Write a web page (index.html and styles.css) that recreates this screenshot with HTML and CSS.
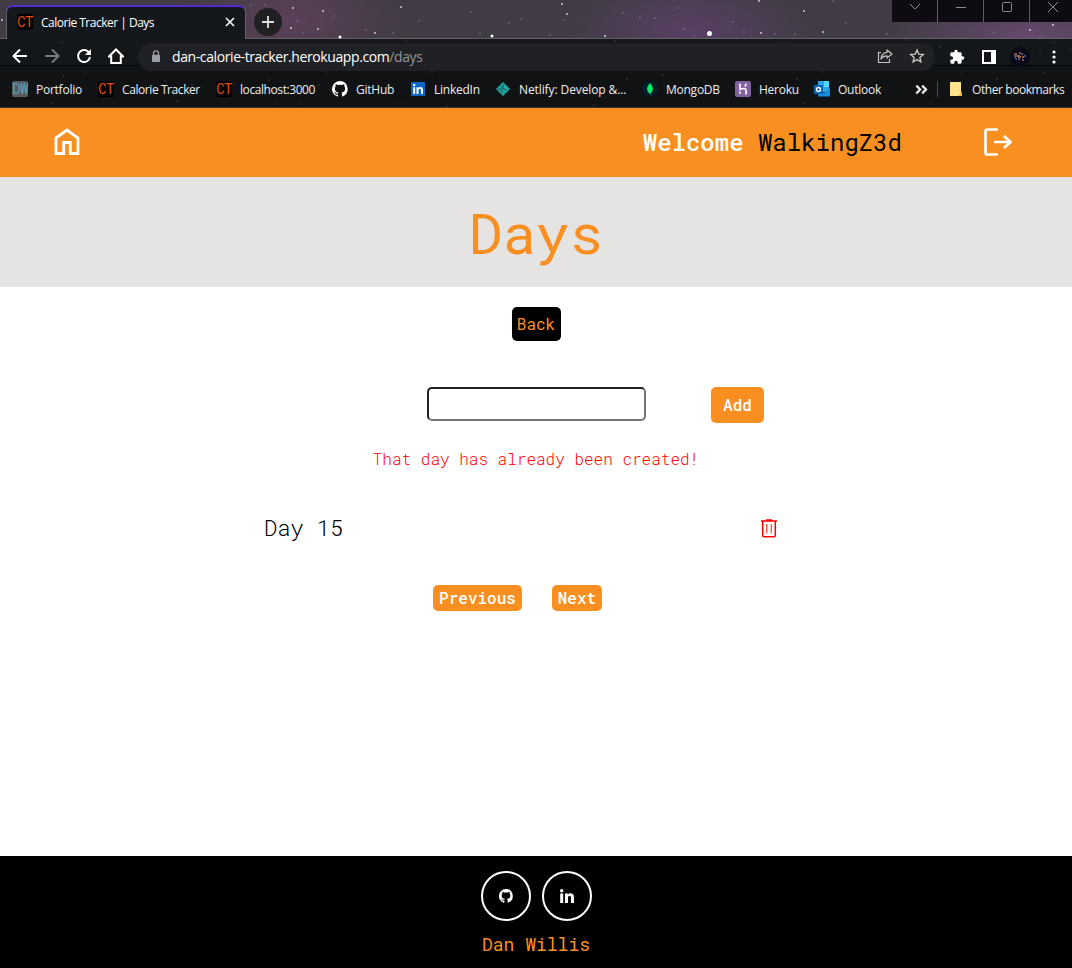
FILE: index.html
```html
<!DOCTYPE html>
<html lang="en">
<head>
<meta charset="utf-8">
<title>Calorie Tracker | Days</title>
<link rel="stylesheet" href="styles.css">
</head>
<body>
<div class="browser">
  <svg class="stars" width="1072" height="108" viewBox="0 0 1072 108" fill="none" stroke-linecap="round" aria-hidden="true">
    <path stroke="#d3c4e7" stroke-width="2" d="M293 8h0M323 11h0M291 28h0M318 29h0M401 7h0M375 33h0M562 4h0M567 14h0M605 36h0M759 1h0M804 11h0M823 32h0M761 33h0M1053 25h0M1030 30h0M2 20h0"/>
    <path stroke="#c9bed4" stroke-width="1" d="M251 5h0M265 5h0M267 16h0M297 21h0M303 33h0M333 16h0M366 30h0M393 33h0M419 21h0M471 12h0M480 33h0M509 23h0M521 19h0M550 35h0M564 20h0M623 13h0M640 17h0M655 18h0M677 8h0M684 29h0M694 36h0M733 22h0M744 32h0M775 34h0M795 34h0M833 1h0M846 23h0M887 34h0M994 33h0M1040 37h0"/>
    <path stroke="#fff" stroke-width="3" d="M340 37h0M492 36h0"/>
    <path stroke="#fff" stroke-width="5" d="M709.500 33.500h0"/>
  </svg>
  <div class="tabstrip">
    <div class="tab"><span class="ct">CT</span><span class="tab-title">Calorie Tracker | Days</span>
      <svg width="10" height="10" viewBox="0 0 10 10"><path d="M1 1l8 8M9 1L1 9" stroke="#fff" stroke-width="1.600"/></svg>
    </div>
    <div class="new-tab"><svg width="14" height="14" viewBox="0 0 14 14"><path d="M7 1v12M1 7h12" stroke="#ddd" stroke-width="1.800"/></svg></div>
    <div class="window-controls">
      <span><svg width="12" height="12" viewBox="0 0 12 12"><path d="M1 3l5 5 5-5"/></svg></span>
      <span><svg width="12" height="12" viewBox="0 0 12 12"><path d="M1 6.500h10"/></svg></span>
      <span><svg width="12" height="12" viewBox="0 0 12 12"><rect x="1.500" y="1.500" width="9" height="9" rx="1"/></svg></span>
      <span><svg width="12" height="12" viewBox="0 0 12 12"><path d="M1 1l10 10M11 1L1 11"/></svg></span>
    </div>
  </div>
  <div class="toolbar">
    <svg class="nav-icon" viewBox="0 0 16 16"><path d="M15 8H2M8 1.500L1.500 8 8 14.500"/></svg>
    <svg class="nav-icon dim" viewBox="0 0 16 16"><path d="M1 8h13M8 1.500L14.500 8 8 14.500"/></svg>
    <svg class="nav-icon" viewBox="0 0 16 16"><path d="M14 9a6 6 0 1 1-1.700-5.200L14 5.500"/><path d="M14.900 1v6H9z" fill="#fff" stroke="none"/></svg>
    <svg class="nav-icon" viewBox="0 0 16 16"><path d="M1 8.500L8 1.500l7 7H12.800V15H3.200V8.500z"/></svg>
    <div class="omnibox">
      <svg width="10" height="13" viewBox="0 0 10 13"><path d="M2.500 5V3.300a2.500 2.500 0 0 1 5 0V5" fill="none" stroke="#9aa0a6" stroke-width="1.300"/><rect x="1" y="4.800" width="8" height="7.200" rx="1" fill="#9aa0a6"/></svg>
      <span class="url">dan-calorie-tracker.herokuapp.com<i>/days</i></span>
      <svg class="share" width="16" height="16" viewBox="0 0 16 16" fill="none" stroke="#c4c4c4" stroke-width="1.200"><path d="M4 4.500H1.500v10h11V11"/><path d="M10 2l5 4-5 4V7.800C7.500 7.800 5.500 8.500 4 11c.2-4 2.500-6.300 6-6.700z" stroke-linejoin="round"/></svg>
      <svg width="16" height="16" viewBox="0 0 16 16" fill="none" stroke="#c4c4c4" stroke-width="1.400"><path d="M8 2l1.800 4.100 4.500.4-3.400 3 1 4.400L8 11.600l-3.900 2.300 1-4.400-3.400-3 4.500-.4z"/></svg>
    </div>
    <svg width="16" height="16" viewBox="0 0 24 24" fill="#fff"><path d="M20.500 11H19V7a2 2 0 0 0-2-2h-4V3.500a2.500 2.500 0 0 0-5 0V5H4a2 2 0 0 0-2 2v3.800h1.500a2.700 2.700 0 0 1 0 5.400H2V20a2 2 0 0 0 2 2h3.800v-1.500a2.700 2.700 0 0 1 5.400 0V22H17a2 2 0 0 0 2-2v-4h1.500a2.500 2.500 0 0 0 0-5z"/></svg>
    <svg width="14" height="14" viewBox="0 0 14 14"><path d="M0 0h14v14H0z" fill="#fff"/><path d="M2 2h7v10H2z" fill="#131518"/></svg>
    <svg class="avatar" width="20" height="20" viewBox="0 0 20 20"><circle cx="10" cy="10" r="10" fill="#0b0a16"/><g stroke-width="2"><path d="M4 7h3m2-1h2m1 7h2" stroke="#815039"/><path d="M4 9h3m4-2h2m1 2h2M8 12h2M6 12h1" stroke="#46527c"/><path d="M7 9h3m2 1h2M5 11h1m2-1h3" stroke="#a0603c"/></g></svg>
    <svg width="4" height="14" viewBox="0 0 4 14" fill="#fff"><circle cx="2" cy="2" r="1.600"/><circle cx="2" cy="7" r="1.600"/><circle cx="2" cy="12" r="1.600"/></svg>
  </div>
  <div class="bookmarks">
    <div><span class="ct dw">DW</span><span>Portfolio</span></div>
    <div><span class="ct">CT</span><span class="tight">Calorie Tracker</span></div>
    <div><span class="ct">CT</span><span class="tight">localhost:3000</span></div>
    <div><svg viewBox="0 0 16 16"><path fill="#fff" d="M8 0a8 8 0 0 0-2.500 15.600c.4.100.5-.2.500-.4v-1.500c-2.200.5-2.700-1-2.700-1-.4-.9-.9-1.200-.9-1.200-.7-.5.100-.5.100-.5.800.100 1.200.8 1.200.8.700 1.300 1.900.9 2.300.7.100-.5.300-.9.500-1.100-1.800-.2-3.600-.9-3.600-4 0-.9.300-1.600.8-2.100-.1-.2-.4-1 .1-2.100 0 0 .7-.2 2.200.8a7.500 7.500 0 0 1 4 0c1.500-1 2.200-.8 2.200-.8.400 1.100.200 1.900.100 2.100.5.600.8 1.300.8 2.100 0 3.100-1.900 3.700-3.700 3.900.3.300.6.800.6 1.500v2.200c0 .2.100.5.600.4A8 8 0 0 0 8 0z"/></svg><span>GitHub</span></div>
    <div><svg class="small" viewBox="0 0 14 14"><path fill="#0a66c2" d="M0 0h14v14H0z"/><g fill="#fff"><circle cx="3.200" cy="3" r="1.200"/><path d="M2.200 5.200h2V12h-2zM5.500 5.200h1.900v1c1-1.700 4.600-1.600 4.600 1.700V12h-2V8.400c0-2.200-2.500-2-2.500 0V12h-2z"/></g></svg><span>LinkedIn</span></div>
    <div><svg class="small" viewBox="0 0 14 14"><path fill="#20aaa0" d="M7 0l7 7-7 7-7-7z"/><path d="M4 3l7 6M2 6l9 2M3 9l5-7M5 12l3-10M1 7l8 4" stroke="#185d60" stroke-width=".7"/></svg><span class="wide">Netlify: Develop &amp;...</span></div>
    <div><svg viewBox="0 0 16 16"><circle cx="8" cy="8" r="8" fill="#001e2b"/><path fill="#00ed64" d="M8 2C3.500 7 5 10.500 7.700 12.500V14h.6v-1.500C11 10.500 12.500 7 8 2z"/></svg><span>MongoDB</span></div>
    <div><svg viewBox="0 0 16 16"><rect width="16" height="16" rx="2" fill="#80619e"/><path d="M5 2.500v6c2.500-1.200 6-1.700 6 .8v4.200M11 2.500c0 1.400-.5 2.300-1.300 3" fill="none" stroke="#fff" stroke-width="1.600"/><path fill="#fff" d="M4.300 10l2 1.800-2 1.800z"/></svg><span>Heroku</span></div>
    <div><svg viewBox="0 0 16 16"><path fill="#28a8ea" d="M4 0h11v11H4z"/><path fill="#50d9ff" d="M10 0h5v6h-5z"/><path fill="#1490df" d="M5 8l5 4 6-5v8.500H4z"/><path fill="#0364b8" d="M0 4h9v9H0z"/><circle cx="4.500" cy="8.500" r="2" fill="none" stroke="#fff" stroke-width="1.400"/></svg><span>Outlook</span></div>
    <svg class="more" viewBox="0 0 10 10"><path d="M1 2l3 3-3 3M5.500 2l3 3-3 3" fill="none" stroke="#eee" stroke-width="1.700"/></svg>
    <div class="other"><svg viewBox="0 0 16 16"><path fill="#ffe38c" d="M2 1h11v10l1 1v3H2z"/><path fill="#eabd45" d="M12 11l2 1v3h-4v-1h2z"/></svg><span class="tight">Other bookmarks</span></div>
  </div>
  <svg class="stars front" width="1072" height="108" viewBox="0 0 1072 108" fill="none" stroke-linecap="round" aria-hidden="true">
    <path stroke="#77777b" stroke-width="1" d="M62 43h0M85 72h0M63 76h0M165 81h0M192 85h0M319 85h0M269 80h0M326 72h0M406 41h0M432 72h0M615 41h0M663 75h0M784 42h0M823 72h0M906 40h0M962 72h0M1044 73h0M1070 50h0M940 47h0M997 79h0M627 79h0M594 105h0M400 103h0M447 107h0M52 103h0M177 101h0M276 104h0M300 104h0M804 103h0M916 94h0M931 104h0M1054 43h0M1040 51h0M797 79h0M12 52h0"/>
  </svg>
</div>

<header class="site-header">
  <svg class="home" width="26" height="29" viewBox="0 0 26 29"><path d="M2 11L13 3l11 8v15.500h-7.700v-11h-6.600v11H2z" fill="none" stroke="#fff" stroke-width="2.800"/></svg>
  <p class="welcome"><b>Welcome</b> WalkingZ3d</p>
  <svg class="logout" width="28" height="28" viewBox="0 0 28 28" fill="none" stroke="#fff" stroke-width="2.700"><path d="M14 1.500H3.500q-2 0-2 2v21q0 2 2 2H14M10 14h16M20 8l6.500 6-6.500 6"/></svg>
</header>
<div class="title-band"><h1>Days</h1></div>
<main>
  <button class="back">Back</button>
  <form class="add-form"><input type="text" aria-label="Day"><button class="add" type="button">Add</button></form>
  <p class="error">That day has already been created!</p>
  <div class="day"><span>Day 15</span>
    <svg width="16" height="19" viewBox="0 0 16 19" fill="none" stroke="#f00" stroke-width="1.500"><path d="M0 2h16M5 1h6M1.700 2v14.500q0 1.200 1.200 1.200h10.200q1.200 0 1.200-1.200V2"/><path d="M5.700 5v9.500M10.300 5v9.500" stroke="#ff542b" stroke-width="1.300"/></svg>
  </div>
  <div class="pager"><button>Previous</button><button>Next</button></div>
</main>
<footer>
  <div class="social">
    <a><svg width="14" height="14" viewBox="0 0 16 16"><path fill="#fff" stroke="#fff" stroke-width=".3" d="M8 0a8 8 0 0 0-2.500 15.600c.4.100.5-.2.500-.4v-1.500c-2.200.5-2.700-1-2.700-1-.4-.9-.9-1.200-.9-1.200-.7-.5.100-.5.100-.5.800.100 1.200.8 1.200.8.700 1.300 1.900.9 2.300.7.100-.5.300-.9.500-1.100-1.800-.2-3.600-.9-3.600-4 0-.9.300-1.600.8-2.100-.1-.2-.4-1 .1-2.100 0 0 .7-.2 2.200.8a7.500 7.500 0 0 1 4 0c1.500-1 2.200-.8 2.200-.8.400 1.100.200 1.900.100 2.100.5.600.8 1.300.8 2.100 0 3.100-1.900 3.700-3.700 3.900.3.300.6.800.6 1.500v2.200c0 .2.100.5.600.4A8 8 0 0 0 8 0z"/></svg></a>
    <a><svg width="14" height="14" viewBox="0 0 14 14" fill="#fff"><circle cx="1.700" cy="1.700" r="1.700"/><path d="M.2 4.500h3V14h-3zM5 4.500h2.900v1.300C9.200 3.600 14 3.500 14 8.200V14h-3V9c0-3-3-2.700-3 0v5H5z"/></svg></a>
  </div>
  <p>Dan Willis</p>
</footer>
</body>
</html>
```
FILE: styles.css
```css
* { box-sizing: border-box; }
body { margin: 0; height: 968px; display: flex; flex-direction: column; background: #fff; font-family: "Roboto Mono", "DejaVu Sans Mono", monospace; overflow: hidden; }
p, h1 { margin: 0; font-weight: 400; }
svg { display: block; flex: none; }
button { border: 0; font-family: inherit; font-size: 16px; font-weight: 500; padding: 0 0 2px; border-radius: 5px; background: #f98f21; color: #fff; white-space: nowrap; }

/* Browser window */
.browser { position: relative; height: 108px; flex: none; background: #101214; border-bottom: 1px solid #353537; font-family: "Open Sans", "Noto Sans", sans-serif; font-size: 12px; color: #eee; white-space: nowrap; }
.stars { position: absolute; left: 0; top: 0; z-index: 0; }
.front { pointer-events: none; }
.tabstrip { height: 39px; display: flex; align-items: flex-start; padding-left: 6px; border-bottom: 1px solid #646266; background: radial-gradient(120px 70px at 290px 20px, #5b4059, transparent), radial-gradient(130px 60px at 690px 32px, #594064, transparent), radial-gradient(150px 60px at 1030px 38px, #66496d, transparent), #403b44; }
.tab { position: relative; z-index: 1; width: 240px; height: 34px; margin-top: 5px; padding: 0 10px 2px 10px; border: 1px solid #626064; border-top: 2px solid #5629ce; border-bottom: 0; border-radius: 7px 7px 0 0; background: #14171b; display: flex; align-items: center; }
.tab-title { flex: 1; margin-left: 8px; letter-spacing: -.5px; color: #fff; }
.ct { width: 16px; height: 16px; flex: none; border-radius: 2px; background: #000; color: #e65007; font: 14px/16px "Roboto Mono", "Roboto", sans-serif; letter-spacing: -.6px; text-align: center; }
.dw { background: #555b60; color: #55a4b5; }
.new-tab { position: relative; z-index: 1; width: 28px; height: 28px; margin: 8px 0 0 8px; border-radius: 50%; background: #202022; display: grid; place-items: center; }
.window-controls { position: relative; z-index: 1; margin: 0 -3px 0 auto; display: flex; height: 22px; gap: 1px; background: #655c69; }
.window-controls span { width: 45px; background: #0e0b12; display: grid; place-items: start center; padding-top: 1px; }
.window-controls svg { fill: none; stroke: #8c8a91; }
.toolbar { position: relative; height: 33px; padding: 3px 16px 1px 12px; display: flex; align-items: center; background: linear-gradient(#14171a 0 26px, #040506 26px 27px, #111416 27px); }
.nav-icon { width: 16px; height: 16px; margin: 0 16px 2px 0; fill: none; stroke: #fff; stroke-width: 2; }
.nav-icon.dim { stroke: #77797b; }
.omnibox { width: 797px; height: 28px; margin-left: -2px; padding: 0 10px 1px 13px; border-radius: 14px; background: #202124; display: flex; align-items: center; }
.url { flex: 1; margin-left: 11px; font-size: 14px; letter-spacing: -.4px; color: #fff; }
.url i { font-style: normal; color: #909397; }
.share { margin-right: 16px; }
.omnibox + svg { margin: 0 17px 0 14px; }
.avatar { margin: 0 22px 0 14px; }
.bookmarks { position: relative; height: 35px; display: grid; grid-template-columns: 86px 118px 116px 79px 85px 146px 93px 79px 101px 22px 1fr; padding: 0 0 1px 12px; align-items: center; background: #101214; }
.bookmarks div { display: flex; align-items: center; gap: 8px; letter-spacing: -.25px; }
.bookmarks .tight { letter-spacing: -.42px; }
.bookmarks .wide { letter-spacing: -.1px; }
.bookmarks div > svg { width: 16px; height: 16px; }
.bookmarks div > svg.small { width: 14px; height: 14px; margin-right: 1px; }
.more { width: 13px; height: 13px; }
.other { border-left: 1px solid #4a4c4e; padding-left: 10px; height: 16px; }

/* Page */
.site-header { height: 69px; flex: none; background: #f98f21; display: flex; align-items: center; padding: 0 60px 2px 54px; }
.welcome { margin-left: auto; font-size: 24px; color: #000; white-space: nowrap; }
.welcome b { font-weight: 500; color: #fff; }
.logout { margin-left: 82px; }
.title-band { height: 110px; flex: none; background: #e6e4e2; }
h1 { text-align: center; color: #f98f21; font-size: 56px; line-height: 110px; }
main { flex: 1; padding-top: 20px; display: flex; flex-direction: column; align-items: center; }
.back { width: 49px; height: 34px; background: #000; color: #f98f21; font-weight: 400; }
.add-form { display: flex; align-items: flex-start; justify-content: space-between; width: 337px; height: 36px; margin: 46px 0 0 119px; }
.add-form input { width: 219px; height: 34px; border: 2px inset #767676; border-radius: 5px; padding: 0; }
.add { width: 53px; height: 36px; }
.error { margin-top: 26px; font-size: 16px; font-weight: 300; line-height: 20px; color: #f00; }
.day { width: 513px; height: 30px; margin: 44px 0 0 -31px; display: flex; align-items: center; justify-content: space-between; font-size: 22px; color: #000; }
.day span { padding-bottom: 2px; font-weight: 300; }
.pager { display: flex; gap: 30px; margin: 42px 0 0 -37px; }
.pager button { height: 26px; padding: 0 6px 2px; }
.pager button + button { padding: 0 5.800px 2px; }
footer { height: 112px; flex: none; padding-top: 15px; background: #000; display: flex; flex-direction: column; align-items: center; color: #f98f21; font-size: 18px; line-height: 24px; }
.social { display: flex; gap: 11px; margin-bottom: 11px; }
.social a { width: 50px; height: 50px; border: 2px solid #fff; border-radius: 50%; display: grid; place-items: center; }
```
